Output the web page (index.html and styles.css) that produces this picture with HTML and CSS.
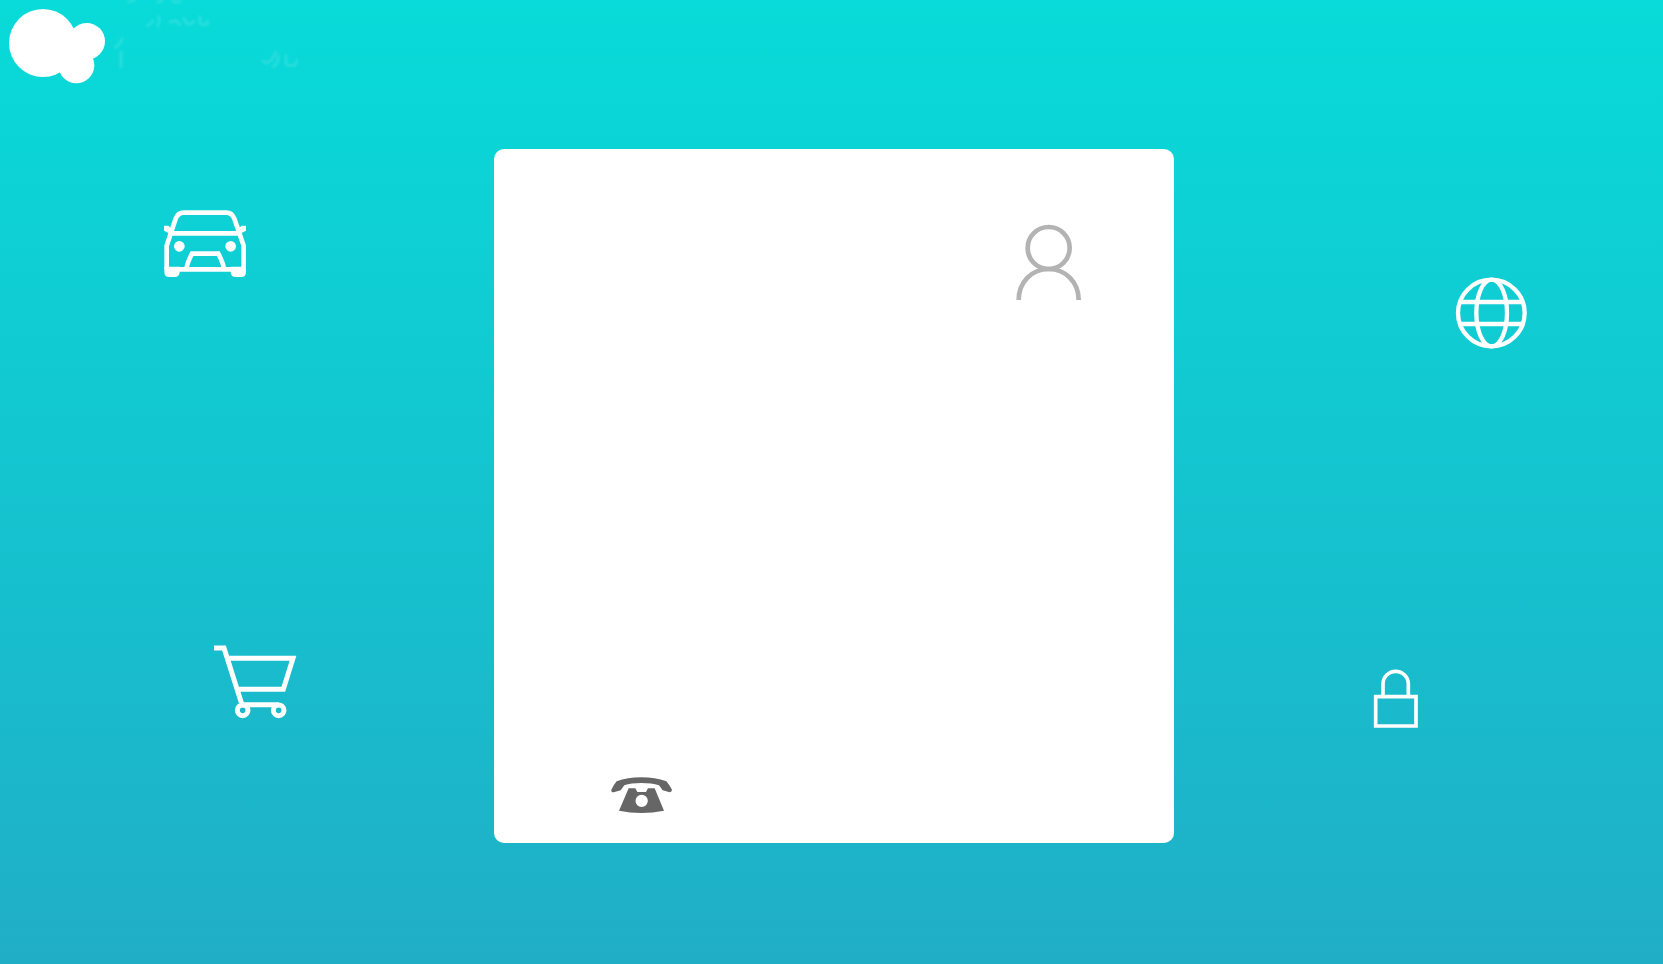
FILE: index.html
```
<!DOCTYPE html>
<html lang="zh">
<head>
<meta charset="utf-8">
<meta name="viewport" content="width=device-width, initial-scale=1">
<title>Login</title>
<link rel="stylesheet" href="styles.css">
</head>
<body>
<header class="header">
  <svg class="logo" viewBox="0 0 960 360" aria-hidden="true">
    <g fill="#fff">
      <circle cx="129" cy="129" r="102"/>
      <circle cx="260" cy="124" r="55"/>
      <circle cx="229" cy="196" r="54"/>
      <path d="M210 90h50v90h-50z"/>
    </g>
    <g class="wisps">
      <path d="M386 5l18-4M472 7q10 0 16-7M518 2q8 8 22 2"/>
      <path d="M442 77q10-4 16-14M476 50q4 14-2 28M508 66l20-4 12 12M552 56l8 14q10 8 22-6M600 50v16q4 12 22 6v-9"/>
      <path d="M366 116q-4 15-20 26M363 156v44"/>
      <path d="M788 182q10 14 28-3l12-22M820 199q15-8 15-32M858 166v24q3 10 28 5l4-13"/>
    </g>
  </svg>
</header>
<main class="stage">
  <div class="side side-left">
    <svg class="icon car" viewBox="0 0 300 255" aria-hidden="true">
      <g fill="none" stroke="#fff" stroke-width="14">
        <path d="M35 207V137L62 56Q69 38 86 38H214Q231 38 238 56L266 137V207M48 100H252M35 208H266"/>
        <path d="M95 202Q98 186 111 161H190Q203 186 206 202"/>
      </g>
      <g fill="#fff">
        <circle cx="73" cy="139" r="16"/><circle cx="227" cy="139" r="16"/>
        <path d="M27 77h13l14 12-7 17-8-8-12-6zM273 77h-13l-14 12 7 17 8-8 12-6zM28 200h46v15q0 16-16 16H42q-14 0-14-16zM273 200h-46v15q0 16 16 16h16q14 0 14-16z"/>
      </g>
    </svg>
    <svg class="icon cart" viewBox="0 0 300 270" aria-hidden="true">
      <g fill="none" stroke="#fff" stroke-width="15">
        <path d="M27 39H57L111 209H221M69 70H264L235 163H99"/>
        <circle cx="113" cy="226" r="16"/><circle cx="221" cy="226" r="16"/>
      </g>
    </svg>
  </div>
  <section class="card">
    <svg class="icon user" viewBox="0 0 270 285" aria-hidden="true">
      <g fill="none" stroke="#b3b3b3" stroke-width="14">
        <circle cx="131" cy="99" r="63"/>
        <path d="M41 255C41 202 80 162 131 162S221 202 221 255"/>
      </g>
    </svg>
    <svg class="icon phone" viewBox="0 0 255 180" aria-hidden="true">
      <path fill="#666" fill-rule="evenodd" d="M34 74Q42 58 50 49Q82 37 124 37T199 49Q207 58 216 74Q216 81 209 82L188 76 177 61Q155 54 124 54T73 61L62 76 41 82Q33 82 34 74ZM86 70H106L112 81H138L144 70H164L192 137Q158 144 124 144T57 137ZM125 89a18 18 0 1 0 0 37a18 18 0 1 0 0-37z"/>
    </svg>
  </section>
  <div class="side side-right">
    <svg class="icon globe" viewBox="0 0 270 285" aria-hidden="true">
      <g fill="none" stroke="#fff" stroke-width="13">
        <circle cx="139" cy="144" r="100"/>
        <ellipse cx="140" cy="144" rx="46" ry="100"/>
        <path d="M45 111H234M45 177H234"/>
      </g>
    </svg>
    <svg class="icon lock" viewBox="0 0 210 225" aria-hidden="true">
      <g fill="none" stroke="#fff" stroke-width="11">
        <path d="M47 110H168V198H47ZM69 110V72A38 38 0 0 1 145 72V110"/>
      </g>
    </svg>
  </div>
</main>
</body>
</html>
```
FILE: styles.css
```
* {
  box-sizing: border-box;
}

body {
  margin: 0;
  min-height: 100vh;
  font-family: "Noto Sans", "Noto Sans CJK SC", sans-serif;
  background: linear-gradient(#08dbd9, #20aec6);
}

.header {
  min-height: 149px;
}

.logo {
  display: block;
  width: 320px;
}

.wisps {
  fill: none;
  stroke: #fff;
  stroke-width: 9;
  stroke-linecap: round;
  opacity: 0.12;
  filter: blur(3px);
}

.stage {
  display: grid;
  grid-template-columns: 494fr 680fr 489fr;
  min-height: 72vh;
}

.side,
.card {
  display: flex;
  flex-direction: column;
  justify-content: space-between;
}

.side-left {
  padding: 51px 0 118px;
}

.side-right {
  padding: 116px 0 108px;
}

.card {
  padding: 66px 79px 18px 106px;
  background: #fff;
  border-radius: 10px;
}

.icon {
  display: block;
}

.car {
  width: 100px;
  margin-left: 31.4%;
}

.cart {
  width: 100px;
  margin-left: 41.5%;
}

.user {
  width: 90px;
  align-self: flex-end;
}

.phone {
  width: 85px;
}

.globe {
  width: 90px;
  margin-left: 55.4%;
}

.lock {
  width: 70px;
  margin-left: 38%;
}
```
